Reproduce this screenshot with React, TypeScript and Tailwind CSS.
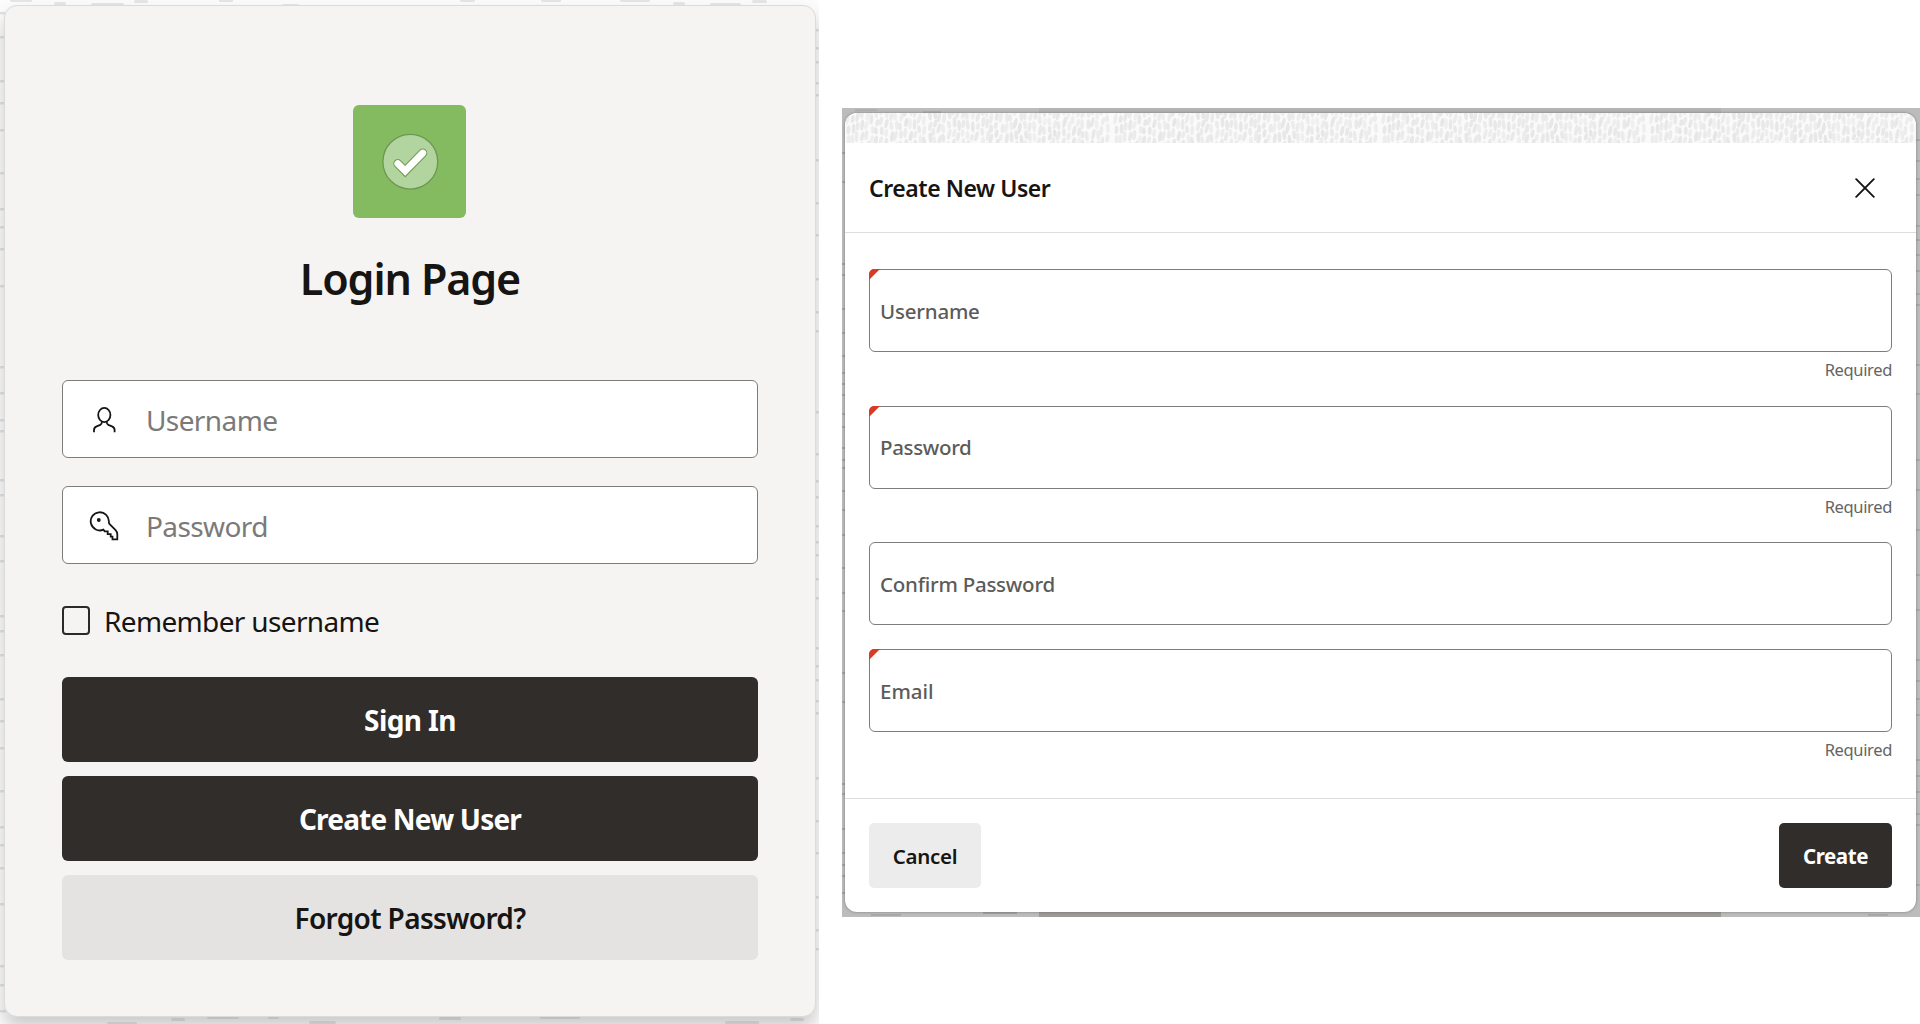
import React from "react";

const leftTicks = [13, 37, 81, 103, 130, 173, 209, 227, 249, 286, 367, 393, 420, 431, 480, 495, 536, 561, 616, 631, 655, 699, 721, 748, 791, 827, 845, 868, 904, 966, 985, 1011];
const rightTicks = [30, 48, 62, 83, 95, 160, 203, 235, 279, 312, 331, 412, 454, 481, 497, 526, 542, 555, 579, 598, 648, 666, 680, 701, 713, 778, 821, 853, 897, 930, 949];
const topDots: [number, number, number][] = [
  [10, 0, 22], [54, 3, 12], [91, 4, 33], [134, 1, 14], [219, 0, 14], [282, 5, 17], [460, 0, 15], [541, 0, 20], [620, 0, 30], [673, 3, 12], [710, 4, 31], [752, 1, 15],
];
const bottomDots: [number, number, number][] = [
  [107, 1023, 30], [171, 1019, 14], [207, 1017, 32], [268, 1017, 11], [309, 1022, 27], [439, 1018, 22], [540, 1017, 40], [725, 1022, 34], [790, 1019, 14],
];
const frameTicks = [153, 182, 264, 275, 309, 333, 356, 373, 384, 395, 414, 427, 448, 460, 468, 491, 510, 535, 568, 593, 611, 673, 702, 784, 794, 829, 853, 865, 876, 893];
const frameTicksRight = [140, 161, 179, 195, 226, 240, 255, 271, 294, 305, 365, 394, 460, 490, 530, 575, 610, 660, 681, 699, 715, 760, 776, 792, 814, 825, 885];

function Backdrop() {
  return (
    <svg className="absolute inset-0 h-full w-full" viewBox="0 0 819 1024" preserveAspectRatio="none">
      <rect width="819" height="1024" fill="#fcfcfc" />
      {leftTicks.map((y) => (
        <rect key={y} x="-3" y={y - 1} width="9" height="2.4" rx="1.2" fill="#e2e3e4" />
      ))}
      {rightTicks.map((y) => (
        <rect key={y} x="812" y={y - 1} width="7" height="2.4" rx="1.2" fill="#e2e2e2" />
      ))}
      {topDots.concat(bottomDots).map(([x, y, w]) => (
        <rect key={x + "-" + y} x={x} y={y - 1} width={w} height="3" rx="1.5" fill="#e6e6e6" />
      ))}
    </svg>
  );
}

function FrameBackdrop() {
  return (
    <svg className="absolute inset-0 h-full w-full" viewBox="842 108 1078 809" preserveAspectRatio="none">
      <rect x="1039" y="108" width="682" height="10" fill="#b3b3b2" />
      <rect x="1039" y="905" width="682" height="12" fill="#9c9b97" />
      <rect x="855" y="109" width="22" height="2" fill="#b0b0b0" />
      <rect x="923" y="111" width="18" height="2" fill="#b0b0b0" />
      <rect x="871" y="914" width="30" height="2" fill="#a9a9a9" />
      <rect x="983" y="912" width="34" height="2" fill="#a2a2a2" />
      <rect x="1868" y="914" width="20" height="2" fill="#a9a9a9" />
      {frameTicks.map((y) => (
        <rect key={y} x="842" y={y - 1} width="4" height="2" fill="#a2a2a2" />
      ))}
      {frameTicksRight.map((y) => (
        <rect key={y} x="1915" y={y - 1} width="5" height="2" fill="#a9a9a9" />
      ))}
    </svg>
  );
}

function strokes() {
  const out: { x: number; y: number; h: number; o: number; r: number }[] = [];
  let seed = 7;
  const rnd = () => {
    seed = (seed * 16807) % 2147483647;
    return seed / 2147483647;
  };
  for (let x = 0; x < 264; x += 4.8) {
    let y = -rnd() * 9;
    while (y < 31) {
      const h = 7 + rnd() * 5;
      out.push({ x: x + rnd() * 2.2, y, h, o: 0.55 + rnd() * 0.45, r: rnd() * 24 - 8 });
      y += h + rnd() * 1.5;
    }
  }
  return out;
}
const marks = strokes();

function TexturedStrip() {
  return (
    <svg className="block h-[30px] w-full shrink-0">
      <defs>
        <pattern id="weave" width="268" height="31" patternUnits="userSpaceOnUse">
          {marks.map((m, i) => (
            <ellipse
              key={i}
              cx={m.x + 1.8}
              cy={m.y + m.h / 2}
              rx="1.9"
              ry={m.h / 2}
              fill="#e6e6e6"
              opacity={m.o}
              transform={`rotate(${m.r} ${m.x + 1.8} ${m.y + m.h / 2})`}
            />
          ))}
        </pattern>
      </defs>
      <rect width="100%" height="100%" fill="#fafafa" />
      <rect width="100%" height="100%" fill="url(#weave)" />
    </svg>
  );
}

function UserIcon() {
  return (
    <svg className="h-[30px] w-[30px]" viewBox="0 0 30 30" fill="none" stroke="#161513" strokeWidth="1.8">
      <ellipse cx="15.3" cy="10" rx="6.1" ry="7.1" />
      <path d="M5 27.2v-2.1c0-1.9.9-3.1 2.6-3.8l3.7-1.5c1.2-.5 1.6-1.3 1.6-3M25.6 27.2v-2.1c0-1.9-.9-3.1-2.6-3.8l-3.7-1.5c-1.2-.5-1.6-1.3-1.6-3" />
    </svg>
  );
}

function KeyIcon() {
  return (
    <svg className="h-[30px] w-[30px]" viewBox="0 0 30 30" fill="none" stroke="#161513" strokeWidth="1.8">
      <path d="M19.9 10.9a9.1 9.1 0 1 0-5.5 7.8l1.3 1.6h3v2.8h3v2.6h1.8v2.7h4.8v-5.1c0-1.8-.5-2.9-1.7-4.2l-6.2-6.2c-.5-.5-.6-1-.5-2z" />
      <circle cx="9.8" cy="9" r="1.9" fill="#161513" stroke="none" />
    </svg>
  );
}

function LoginInput({ icon, label }: { icon: React.ReactNode; label: string }) {
  return (
    <div className="flex h-[78px] items-center rounded-[6px] border border-[#7d7c79] bg-white pl-[26px] pt-px">
      {icon}
      <span className="ml-[27px] text-[28px] leading-none tracking-[-0.6px] text-[#7b7a78]">{label}</span>
    </div>
  );
}

function DialogField({ label, required, spacing }: { label: string; required?: boolean; spacing: string }) {
  return (
    <div className={required ? "h-[136.5px]" : "h-[107px]"}>
      <div className="relative flex h-[83px] items-center rounded-[6px] border border-[#7d7d7b] pl-[10px] pt-px">
        {required && (
          <svg className="absolute -left-px -top-px h-[11px] w-[11px]" viewBox="0 0 11 11">
            <path d="M0 11V5a5 5 0 0 1 5-5h6z" fill="#d63b25" />
          </svg>
        )}
        <span className={"text-[20.5px] font-medium leading-none text-[#5c5b59] " + spacing}>{label}</span>
      </div>
      {required && (
        <div className="mt-[6px] text-right text-[16.5px] leading-[23px] tracking-[-0.35px] text-[#656462]">Required</div>
      )}
    </div>
  );
}

export default function App() {
  return (
    <div className="flex h-[1024px] w-[1920px] overflow-hidden bg-white font-['Noto_Sans',sans-serif] text-[#161513]">
      <section className="relative h-[1024px] w-[819px] shrink-0 overflow-hidden pl-[4px] pt-[5px]">
        <Backdrop />
        <div className="relative flex h-[1012px] w-[812px] flex-col rounded-[13px] border border-[#dcdbda] bg-[#f5f4f2] px-[57px] pt-[99px] shadow-[0_10px_18px_rgba(0,0,0,0.2)]">
          <div className="-ml-px flex h-[113px] w-[113px] shrink-0 items-center justify-center self-center rounded-[6px] bg-[#84bb61]">
            <svg className="h-[58px] w-[58px]" viewBox="0 0 58 58">
              <circle cx="29.3" cy="28.7" r="27.4" fill="#b2d5a0" stroke="#6d984f" strokeWidth="1.3" />
              <path d="M16.8 30.6L24.2 38L41.8 20" fill="none" stroke="#71a04f" strokeWidth="9" strokeLinecap="round" />
              <path d="M16.8 30.6L24.2 38L41.8 20" fill="none" stroke="#fff" strokeWidth="6.8" strokeLinecap="round" />
            </svg>
          </div>
          <h1 className="mt-[29px] h-[64px] text-center text-[43px] font-semibold leading-[64px] tracking-[-1.1px]">Login Page</h1>
          <div className="mt-[69px] flex flex-col gap-[28px]">
            <LoginInput icon={<UserIcon />} label="Username" />
            <LoginInput icon={<KeyIcon />} label="Password" />
          </div>
          <label className="mt-[42px] flex h-[29px] items-center">
            <span className="h-[29px] w-[28px] rounded-[4px] border-2 border-[#2b2a28]" />
            <span className="ml-[14px] text-[28px] leading-none tracking-[-0.65px]">Remember username</span>
          </label>
          <div className="mt-[42px] flex flex-col gap-[14px]">
            <button className="h-[85px] rounded-[6px] bg-[#312d2a] text-[28px] font-bold leading-none tracking-[-0.6px] text-white">Sign In</button>
            <button className="h-[85px] rounded-[6px] bg-[#312d2a] text-[28px] font-bold leading-none tracking-[-0.8px] text-white">Create New User</button>
            <button className="h-[85px] rounded-[6px] bg-[#e4e3e1] text-[28px] font-semibold leading-none tracking-[-0.65px]">Forgot Password?</button>
          </div>
        </div>
      </section>

      <section className="relative ml-[23px] mt-[108px] h-[809px] w-[1078px] shrink-0 overflow-hidden bg-[#bcbcbc] pl-[3px] pt-[5px]">
        <FrameBackdrop />
        <div className="relative flex h-[799px] w-[1071px] flex-col overflow-hidden rounded-[12px] bg-white shadow-[0_0_3px_rgba(0,0,0,0.35)]">
          <TexturedStrip />
          <header className="flex h-[90px] shrink-0 items-center justify-between border-b border-[#dededd] pl-[24px] pr-[41px]">
            <h2 className="pt-[2px] text-[23px] font-semibold leading-none tracking-[-0.45px]">Create New User</h2>
            <svg className="h-[20px] w-[20px]" viewBox="0 0 20 20" fill="none" stroke="#161513" strokeWidth="1.9" strokeLinecap="round">
              <path d="M1.2 1.2l17.6 17.6M18.8 1.2L1.2 18.8" />
            </svg>
          </header>
          <div className="h-[565px] shrink-0 px-[24px] pt-[36px]">
            <DialogField label="Username" required spacing="tracking-[-0.2px]" />
            <DialogField label="Password" required spacing="tracking-[-0.35px]" />
            <DialogField label="Confirm Password" spacing="tracking-[-0.25px]" />
            <DialogField label="Email" required spacing="" />
          </div>
          <footer className="flex flex-1 items-center justify-between border-t border-[#dededd] px-[24px]">
            <button className="h-[65px] w-[112px] rounded-[5px] bg-[#ececec] pt-px text-[20.5px] font-semibold leading-none tracking-[-0.3px]">Cancel</button>
            <button className="h-[65px] w-[113px] rounded-[5px] bg-[#312d2a] pt-px text-[20.5px] font-bold leading-none tracking-[-0.45px] text-white">Create</button>
          </footer>
        </div>
      </section>
    </div>
  );
}
